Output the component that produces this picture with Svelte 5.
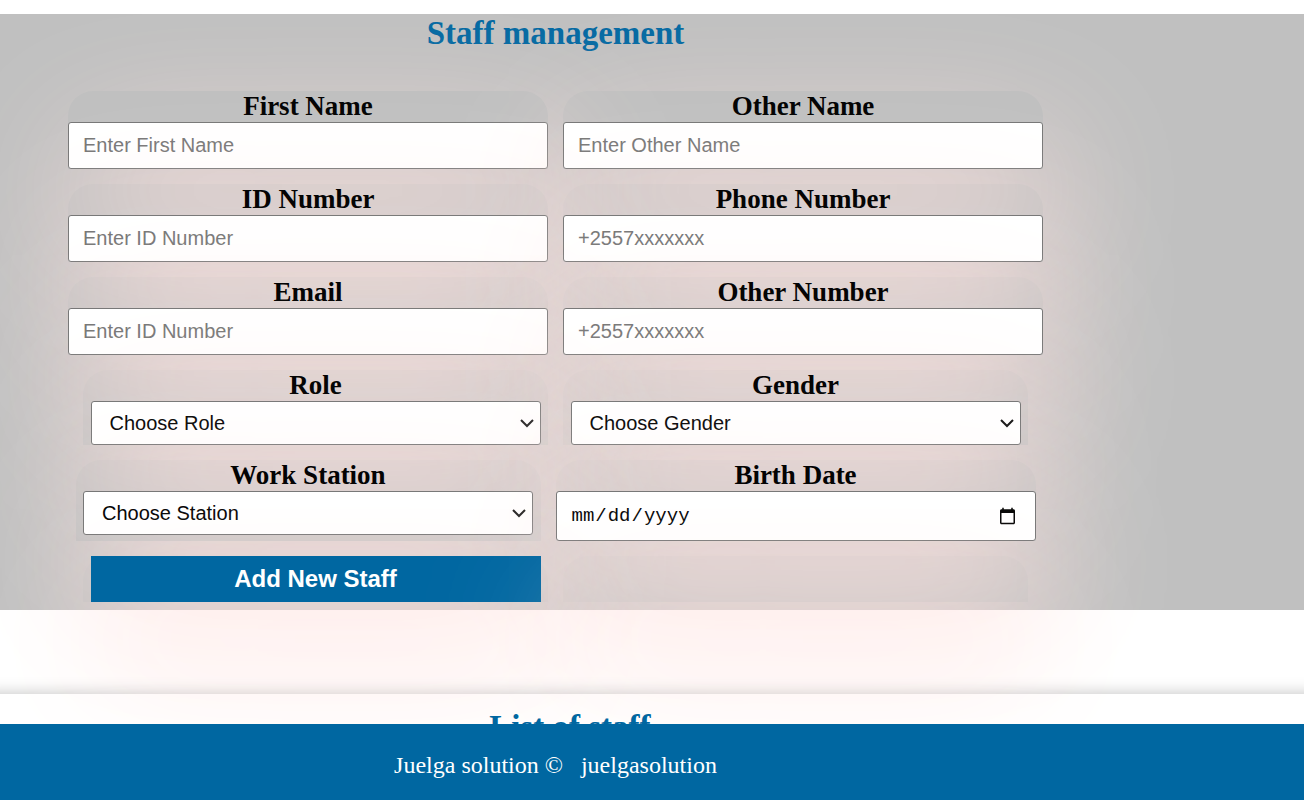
<script lang="ts">
  const rows = [
    [
      { id: 'first', label: 'First Name', type: 'text', hint: 'Enter First Name' },
      { id: 'other', label: 'Other Name', type: 'text', hint: 'Enter Other Name' },
    ],
    [
      { id: 'idno', label: 'ID Number', type: 'text', hint: 'Enter ID Number' },
      { id: 'phone', label: 'Phone Number', type: 'tel', hint: '+2557xxxxxxx' },
    ],
    [
      { id: 'email', label: 'Email', type: 'email', hint: 'Enter ID Number' },
      { id: 'phone2', label: 'Other Number', type: 'tel', hint: '+2557xxxxxxx' },
    ],
    [
      { id: 'role', label: 'Role', type: 'select', hint: 'Choose Role' },
      { id: 'gender', label: 'Gender', type: 'select', hint: 'Choose Gender' },
    ],
    [
      { id: 'station', label: 'Work Station', type: 'select', hint: 'Choose Station' },
      { id: 'birth', label: 'Birth Date', type: 'date', hint: '' },
    ],
  ];
</script>

<div class="page">
  <main class="manage">
    <h1>Staff management</h1>
    <form onsubmit={(e) => e.preventDefault()}>
      {#each rows as row}
        <div class="row">
          {#each row as field}
            <div class="item" class:narrow={field.type === 'select'}>
              <label for={field.id}>{field.label}</label>
              {#if field.type === 'select'}
                <select id={field.id}>
                  <option>{field.hint}</option>
                </select>
              {:else}
                <input id={field.id} type={field.type} placeholder={field.hint} />
              {/if}
            </div>
          {/each}
        </div>
      {/each}
      <div class="row">
        <div class="item narrow"><button type="submit">Add New Staff</button></div>
        <div class="item narrow"></div>
      </div>
    </form>
  </main>

  <section class="list">
    <h2>List of staff</h2>
  </section>

  <footer>
    <span>Juelga solution ©</span>
    <a href="#juelgasolution">juelgasolution</a>
  </footer>
</div>

<style>
  :global(body) {
    margin: 0;
    background: #fff;
  }

  .page {
    box-sizing: border-box;
    min-height: 100vh;
    padding-top: 14px;
    overflow: hidden;
    font-family: 'Liberation Serif', 'Times New Roman', serif;
  }

  .manage,
  footer {
    padding-right: 14.8%;
  }

  .manage {
    background: silver;
    padding-bottom: 8px;
  }

  h1,
  h2 {
    margin: 0;
    color: #0067a1;
    font-size: 33px;
    line-height: 38px;
    text-align: center;
  }

  form {
    display: flex;
    flex-direction: column;
    gap: 15px;
    padding-top: 39px;
  }

  .row {
    display: flex;
    justify-content: center;
    gap: 15px;
  }

  .item {
    display: flex;
    flex-direction: column;
    align-items: center;
    width: 480px;
    border-radius: 25px 25px 0 0;
    box-shadow: 10px 60px 140px mistyrose;
  }

  .item.narrow {
    width: 465px;
  }

  label {
    color: #000;
    font-size: 27px;
    font-weight: bold;
    line-height: 31px;
  }

  input,
  select,
  button {
    box-sizing: border-box;
    font-family: 'Liberation Sans', Arial, sans-serif;
    font-size: 20px;
  }

  input,
  select {
    border: 1px solid #767676;
    border-radius: 3px;
    background-color: #fff;
  }

  input {
    width: 100%;
    height: 47px;
    padding: 0 14px;
  }

  input::placeholder {
    color: #757575;
  }

  input[type='date'] {
    height: 50px;
    padding-right: 16px;
    font-family: 'Liberation Mono', monospace;
    font-size: 19px;
  }

  select {
    width: 450px;
    height: 44px;
    padding: 0 18px;
    appearance: none;
    background-image: url("data:image/svg+xml,%3Csvg xmlns='http://www.w3.org/2000/svg' width='14' height='10' viewBox='0 0 14 10'%3E%3Cpath d='M1 2 7 8 13 2' fill='none' stroke='%23111' stroke-width='2'/%3E%3C/svg%3E");
    background-repeat: no-repeat;
    background-position: right 6px center;
    color: #000;
  }

  button {
    width: 450px;
    height: 46px;
    padding: 0;
    border: 0;
    background: #0067a1;
    color: #fff;
    font-size: 24px;
    font-weight: bold;
  }

  .list {
    margin-top: 84px;
    padding: 14px 12.6% 80px 0;
    box-shadow: 0 15px 15px 15px rgba(0, 0, 0, 0.25);
  }

  footer {
    position: fixed;
    right: 0;
    bottom: 0;
    left: 0;
    display: flex;
    justify-content: center;
    gap: 18px;
    padding-top: 27px;
    padding-bottom: 21px;
    background: #0067a1;
    color: #fff;
    font-size: 24px;
    line-height: 28px;
  }

  footer a {
    color: inherit;
    text-decoration: none;
  }
</style>
